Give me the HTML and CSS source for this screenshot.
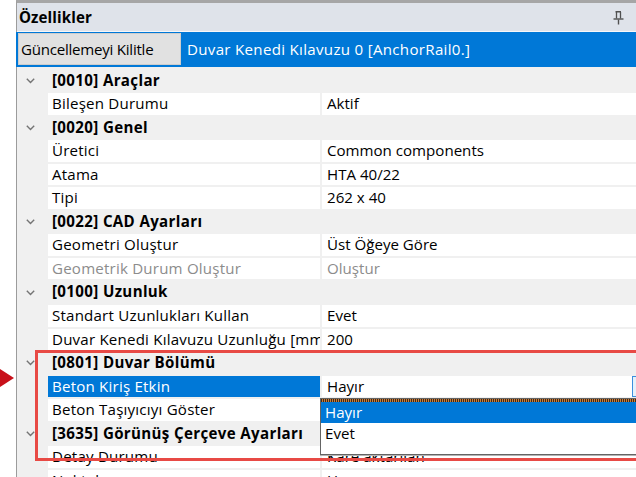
FILE: index.html
```html
<!DOCTYPE html>
<html lang="tr">
<head>
<meta charset="utf-8">
<title>Özellikler</title>
<link rel="stylesheet" href="styles.css">
</head>
<body>
<div class="stage">
  <section class="panel">
    <header class="titlebar">
      <span class="title">Özellikler</span>
      <svg class="pin" width="11" height="14" viewBox="0 0 11 14" aria-hidden="true">
        <path d="M2.5 0.75 H8" stroke="#505050" stroke-width="1.5" fill="none"/>
        <path d="M3.5 1 V7.5 M7.5 1 V7.5" stroke="#505050" stroke-width="1.3" fill="none"/>
        <path d="M0.5 8 H10.5" stroke="#505050" stroke-width="1.4" fill="none"/>
        <path d="M5.5 8.5 V13.5" stroke="#505050" stroke-width="1.4" fill="none"/>
      </svg>
    </header>

    <div class="toolbar">
      <button class="lock-btn" type="button">Güncellemeyi Kilitle</button>
      <span class="selection">Duvar Kenedi Kılavuzu 0 [AnchorRail0.]</span>
    </div>

    <div class="grid">
      <div class="row group">
        <span class="gutter"><svg class="chevron" width="9" height="6" viewBox="0 0 9 6"><polyline points="0.8,0.8 4.5,4.5 8.2,0.8"/></svg></span>
        <span class="group-name">[0010] Araçlar</span>
      </div>
      <div class="row">
        <span class="gutter"></span>
        <span class="name">Bileşen Durumu</span>
        <span class="value">Aktif</span>
      </div>

      <div class="row group">
        <span class="gutter"><svg class="chevron" width="9" height="6" viewBox="0 0 9 6"><polyline points="0.8,0.8 4.5,4.5 8.2,0.8"/></svg></span>
        <span class="group-name">[0020] Genel</span>
      </div>
      <div class="row">
        <span class="gutter"></span>
        <span class="name">Üretici</span>
        <span class="value">Common components</span>
      </div>
      <div class="row">
        <span class="gutter"></span>
        <span class="name">Atama</span>
        <span class="value">HTA 40/22</span>
      </div>
      <div class="row">
        <span class="gutter"></span>
        <span class="name">Tipi</span>
        <span class="value">262 x 40</span>
      </div>

      <div class="row group">
        <span class="gutter"><svg class="chevron" width="9" height="6" viewBox="0 0 9 6"><polyline points="0.8,0.8 4.5,4.5 8.2,0.8"/></svg></span>
        <span class="group-name">[0022] CAD Ayarları</span>
      </div>
      <div class="row">
        <span class="gutter"></span>
        <span class="name">Geometri Oluştur</span>
        <span class="value">Üst Öğeye Göre</span>
      </div>
      <div class="row disabled">
        <span class="gutter"></span>
        <span class="name">Geometrik Durum Oluştur</span>
        <span class="value">Oluştur</span>
      </div>

      <div class="row group">
        <span class="gutter"><svg class="chevron" width="9" height="6" viewBox="0 0 9 6"><polyline points="0.8,0.8 4.5,4.5 8.2,0.8"/></svg></span>
        <span class="group-name">[0100] Uzunluk</span>
      </div>
      <div class="row">
        <span class="gutter"></span>
        <span class="name">Standart Uzunlukları Kullan</span>
        <span class="value">Evet</span>
      </div>
      <div class="row">
        <span class="gutter"></span>
        <span class="name">Duvar Kenedi Kılavuzu Uzunluğu [mm]</span>
        <span class="value">200</span>
      </div>

      <div class="row group">
        <span class="gutter"><svg class="chevron" width="9" height="6" viewBox="0 0 9 6"><polyline points="0.8,0.8 4.5,4.5 8.2,0.8"/></svg></span>
        <span class="group-name">[0801] Duvar Bölümü</span>
      </div>
      <div class="row selected">
        <span class="gutter"></span>
        <span class="name">Beton Kiriş Etkin</span>
        <span class="value">Hayır
          <span class="combo-btn"></span>
          <span class="dropdown">
            <span class="focus-line"></span>
            <span class="option active">Hayır</span>
            <span class="option">Evet</span>
          </span>
        </span>
      </div>
      <div class="row">
        <span class="gutter"></span>
        <span class="name">Beton Taşıyıcıyı Göster</span>
        <span class="value"></span>
      </div>

      <div class="row group">
        <span class="gutter"><svg class="chevron" width="9" height="6" viewBox="0 0 9 6"><polyline points="0.8,0.8 4.5,4.5 8.2,0.8"/></svg></span>
        <span class="group-name">[3635] Görünüş Çerçeve Ayarları</span>
      </div>
      <div class="row">
        <span class="gutter"></span>
        <span class="name">Detay Durumu</span>
        <span class="value">Kare aktarılan</span>
      </div>
      <div class="row">
        <span class="gutter"></span>
        <span class="name">Noktalar</span>
        <span class="value">Hayır</span>
      </div>
    </div>
  </section>

  <svg class="callout-arrow" width="14" height="18" viewBox="0 0 14 18" aria-hidden="true">
    <polygon points="0,0 14,9 0,18"/>
  </svg>
  <div class="callout-box"></div>
</div>
</body>
</html>
```

FILE: styles.css
```css
* {
  box-sizing: border-box;
}

html,
body {
  margin: 0;
  padding: 0;
  overflow: hidden;
  background: #ffffff;
}

body {
  font-family: "Segoe UI", "Open Sans", "Noto Sans", sans-serif;
  font-size: 15.1px;
  color: #000000;
}

.stage {
  position: relative;
  width: 636px;
  height: 477px;
  overflow: hidden;
}

/* Docked properties window */
.panel {
  margin-left: 16px;
  width: 620px;
  height: 520px;
  border-top: 3px solid #a6a6a6;
  border-left: 1px solid #9c9c9c;
  background: #f0f0f0;
}

.titlebar {
  height: 29px;
  display: flex;
  align-items: center;
  justify-content: space-between;
  padding: 0 12px 0 2px;
  background: #dfe3ea;
  border-bottom: 1px solid #f6f7f9;
}

.title {
  font-weight: 700;
  line-height: 28px;
  letter-spacing: 0.1px;
}

.pin {
  display: block;
  margin-top: 1px;
}

/* Toolbar with the lock button and the current selection */
.toolbar {
  height: 34.5px;
  margin-left: -1px;
  padding: 1px 0 1.5px 2px;
  display: flex;
  align-items: stretch;
  background: #0078d7;
}

.lock-btn {
  width: 163px;
  margin: 0;
  padding: 0 0 0 2px;
  text-align: left;
  font: inherit;
  letter-spacing: -0.25px;
  color: #000;
  background: #e1e1e1;
  border: 1px solid #cdcdcd;
  white-space: nowrap;
  overflow: hidden;
}

.selection {
  margin-left: 6px;
  line-height: 32px;
  letter-spacing: 0.3px;
  color: #ffffff;
  white-space: nowrap;
}

/* Property grid */
.grid {
  padding-top: 3px;
  display: flex;
  flex-direction: column;
  gap: 2px;
}

.row {
  height: 21.55px;
  display: grid;
  grid-template-columns: 31px 272px 1fr;
  line-height: 21.55px;
  white-space: nowrap;
}

.gutter {
  display: flex;
  align-items: center;
  padding-left: 9px;
}

.chevron {
  display: block;
  margin-top: 1px;
}

.chevron polyline {
  fill: none;
  stroke: #747474;
  stroke-width: 1.4;
}

.group-name {
  grid-column: 2 / -1;
  padding-left: 4px;
  font-weight: 700;
  letter-spacing: 0.35px;
}

.name {
  padding-left: 4px;
  background: #ffffff;
  overflow: hidden;
  letter-spacing: 0.2px;
}

.value {
  margin-left: 2px;
  padding-left: 5px;
  background: #ffffff;
}

.disabled .name,
.disabled .value {
  color: #8c8c8c;
}

.selected .name {
  background: #0078d7;
  color: #ffffff;
}

/* Open combo box editor, drawn above the rows that follow */
.selected .value {
  position: relative;
  z-index: 2;
}

.combo-btn {
  position: absolute;
  top: 0;
  bottom: 0;
  right: -14px;
  width: 18px;
  border: 1px solid #3c8fdc;
  background: #e5f1fb;
}

.dropdown {
  position: absolute;
  left: -2px;
  top: calc(100% + 1px);
  width: 330px;
  height: 57px;
  display: flex;
  flex-direction: column;
  border: 1px solid #646464;
  background: #ffffff;
  box-shadow: 0 1px 0 #b4b4b4;
}

.focus-line {
  height: 2.5px;
  flex: none;
  background: repeating-linear-gradient(90deg, #3d2c1c 0 1px, #cf7c35 1px 2px);
}

.option {
  height: 21px;
  flex: none;
  line-height: 21px;
  padding-left: 4px;
  color: #000000;
}

.option.active {
  background: #0078d7;
  color: #ffffff;
}

/* Annotation marks */
.callout-arrow {
  position: absolute;
  left: 0;
  top: 369px;
}

.callout-arrow polygon {
  fill: #c8101a;
}

.callout-box {
  position: absolute;
  left: 35px;
  top: 350px;
  width: 640px;
  height: 111px;
  border: 3px solid #e84a45;
  pointer-events: none;
  z-index: 3;
}
```
